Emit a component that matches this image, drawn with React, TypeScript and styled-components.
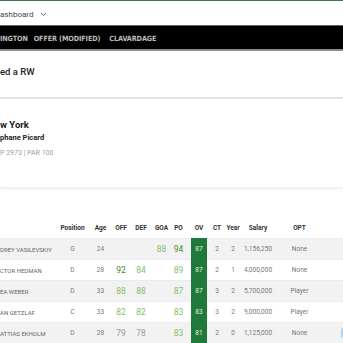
import React from 'react';
import styled, { createGlobalStyle } from 'styled-components';

const GlobalStyle = createGlobalStyle`
  html, body {
    margin: 0;
    padding: 0;
    background: #ffffff;
    overflow: hidden;
  }
  body {
    font-family: Roboto, "Liberation Sans", Arial, sans-serif;
  }
`;

const Page = styled.div`
  width: 343px;
  height: 343px;
  overflow: hidden;
`;

const TopBar = styled.div`
  height: 25px;
  border-top: 1px solid #3b7a4e;
  display: flex;
  align-items: center;
  gap: 7px;
  font-size: 8px;
  color: #444;
  padding-top: 2px;
  box-sizing: border-box;
`;

const NavBar = styled.div`
  height: 26px;
  box-sizing: border-box;
  background: #000;
  border-top: 1px solid #5c5c5c;
  border-bottom: 2px solid #8c8c8c;
  display: flex;
  align-items: center;
  padding-top: 1px;
`;

const NavItem = styled.span<{ $gap?: number }>`
  margin-left: ${(p) => p.$gap || 0}px;
  font-family: "Liberation Sans Narrow", "DejaVu Sans Condensed", sans-serif;
  font-stretch: condensed;
  font-weight: 700;
  font-size: 7.2px;
  letter-spacing: -0.1px;
  color: #bdbdbd;
  white-space: nowrap;
`;

const TitleBlock = styled.div`
  height: 48px;
  box-sizing: border-box;
  padding-top: 15px;
  border-bottom: 2px solid #e2e2e2;
  font-size: 9.5px;
  line-height: 12px;
  font-weight: 500;
  color: #222;
`;

const TeamCard = styled.div`
  height: 89px;
  box-sizing: border-box;
  padding-top: 20px;
  box-shadow: 0 2px 3px rgba(0, 0, 0, 0.05);
  border-bottom: 1px solid #f1f1f1;
`;

const TeamName = styled.div`
  font-size: 9.5px;
  line-height: 12px;
  font-weight: 700;
  color: #1a1a1a;
`;

const Owner = styled.div`
  font-size: 7.5px;
  line-height: 10px;
  margin-top: 2px;
  font-weight: 700;
  color: #222;
`;

const CapLine = styled.div`
  font-size: 7px;
  line-height: 10px;
  margin-top: 5px;
  color: #a0a0a0;
`;

const Table = styled.div`
  margin-top: 29px;
  width: 400px;
`;

const Row = styled.div<{ $shade?: boolean; $head?: boolean }>`
  display: grid;
  grid-template-columns: 57px 31px 25px 16px 24px 17px 17px 24px 12px 20px 30px 53px 1fr;
  height: 21px;
  align-items: center;
  background: ${(p) => (p.$shade ? '#f2f2f2' : '#ffffff')};
  border-top: ${(p) => (p.$head ? 'none' : '1px solid #ececec')};
  box-sizing: border-box;
`;

const HeadCell = styled.div`
  text-align: center;
  font-size: 6.5px;
  font-weight: 700;
  color: #333;
  white-space: nowrap;
`;

const NameCell = styled.div`
  font-size: 6px;
  color: #666;
  white-space: nowrap;
  overflow: hidden;
`;

const Cell = styled.div`
  text-align: center;
  font-size: 6.5px;
  color: #777;
  white-space: nowrap;
`;

const Rating = styled.div<{ $tone: string }>`
  text-align: center;
  font-size: 8.5px;
  color: ${(p) => p.$tone};
`;

const OvCell = styled.div`
  align-self: stretch;
  display: flex;
  justify-content: center;
  margin-top: -1px;
`;

const OvBadge = styled.div`
  width: 16px;
  background: #1d7a3a;
  color: #e8f3ea;
  font-size: 6.5px;
  display: flex;
  align-items: center;
  justify-content: center;
`;

const TradeButton = styled.div`
  margin-left: 15px;
  width: 30px;
  height: 10px;
  background: #b7d2ee;
  border-radius: 2px;
`;

const tone = (v?: number) => {
  if (v === undefined) return '#999';
  if (v >= 90) return '#3e8c2f';
  if (v >= 80) return '#86c06e';
  return '#9a9a9a';
};

type Player = {
  name: string;
  pos: string;
  age: number;
  off?: number;
  def?: number;
  goa?: number;
  po: number;
  ov: number;
  ct: number;
  year: number;
  salary: string;
  opt: string;
  action?: boolean;
};

const players: Player[] = [
  { name: 'DREY VASILEVSKIY', pos: 'G', age: 24, goa: 88, po: 94, ov: 87, ct: 2, year: 2, salary: '1,156,250', opt: 'None' },
  { name: 'CTOR HEDMAN', pos: 'D', age: 28, off: 92, def: 84, po: 89, ov: 87, ct: 2, year: 1, salary: '4,000,000', opt: 'None' },
  { name: 'EA WEBER', pos: 'D', age: 33, off: 88, def: 88, po: 87, ov: 87, ct: 3, year: 2, salary: '5,700,000', opt: 'Player' },
  { name: 'AN GETZLAF', pos: 'C', age: 33, off: 82, def: 82, po: 83, ov: 83, ct: 3, year: 2, salary: '9,000,000', opt: 'Player' },
  { name: 'ATTIAS EKHOLM', pos: 'D', age: 28, off: 79, def: 78, po: 83, ov: 81, ct: 2, year: 0, salary: '1,125,000', opt: 'None', action: true },
];

const Chevron = () => (
  <svg width="7" height="5" viewBox="0 0 7 5">
    <path d="M1 1l2.5 2.5L6 1" fill="none" stroke="#666" strokeWidth="1" />
  </svg>
);

export default function App() {
  return (
    <Page>
      <GlobalStyle />
      <TopBar>
        <span>ashboard</span>
        <Chevron />
      </TopBar>
      <NavBar>
        <NavItem>INGTON</NavItem>
        <NavItem $gap={6}>OFFER (MODIFIED)</NavItem>
        <NavItem $gap={9}>CLAVARDAGE</NavItem>
      </NavBar>
      <TitleBlock>ed a RW</TitleBlock>
      <TeamCard>
        <TeamName>w York</TeamName>
        <Owner>phane Picard</Owner>
        <CapLine>P 2973 | PAR 100</CapLine>
      </TeamCard>
      <Table>
        <Row $head>
          <div />
          <HeadCell>Position</HeadCell>
          <HeadCell>Age</HeadCell>
          <HeadCell>OFF</HeadCell>
          <HeadCell>DEF</HeadCell>
          <HeadCell>GOA</HeadCell>
          <HeadCell>PO</HeadCell>
          <HeadCell>OV</HeadCell>
          <HeadCell>CT</HeadCell>
          <HeadCell>Year</HeadCell>
          <HeadCell>Salary</HeadCell>
          <HeadCell>OPT</HeadCell>
          <div />
        </Row>
        {players.map((p, i) => (
          <Row key={p.name} $shade={i % 2 === 0}>
            <NameCell>{p.name}</NameCell>
            <Cell>{p.pos}</Cell>
            <Cell>{p.age}</Cell>
            <Rating $tone={tone(p.off)}>{p.off ?? ''}</Rating>
            <Rating $tone={tone(p.def)}>{p.def ?? ''}</Rating>
            <Rating $tone={tone(p.goa)}>{p.goa ?? ''}</Rating>
            <Rating $tone={tone(p.po)}>{p.po}</Rating>
            <OvCell>
              <OvBadge>{p.ov}</OvBadge>
            </OvCell>
            <Cell>{p.ct}</Cell>
            <Cell>{p.year}</Cell>
            <Cell>{p.salary}</Cell>
            <Cell>{p.opt}</Cell>
            <div>{p.action && <TradeButton />}</div>
          </Row>
        ))}
      </Table>
    </Page>
  );
}
